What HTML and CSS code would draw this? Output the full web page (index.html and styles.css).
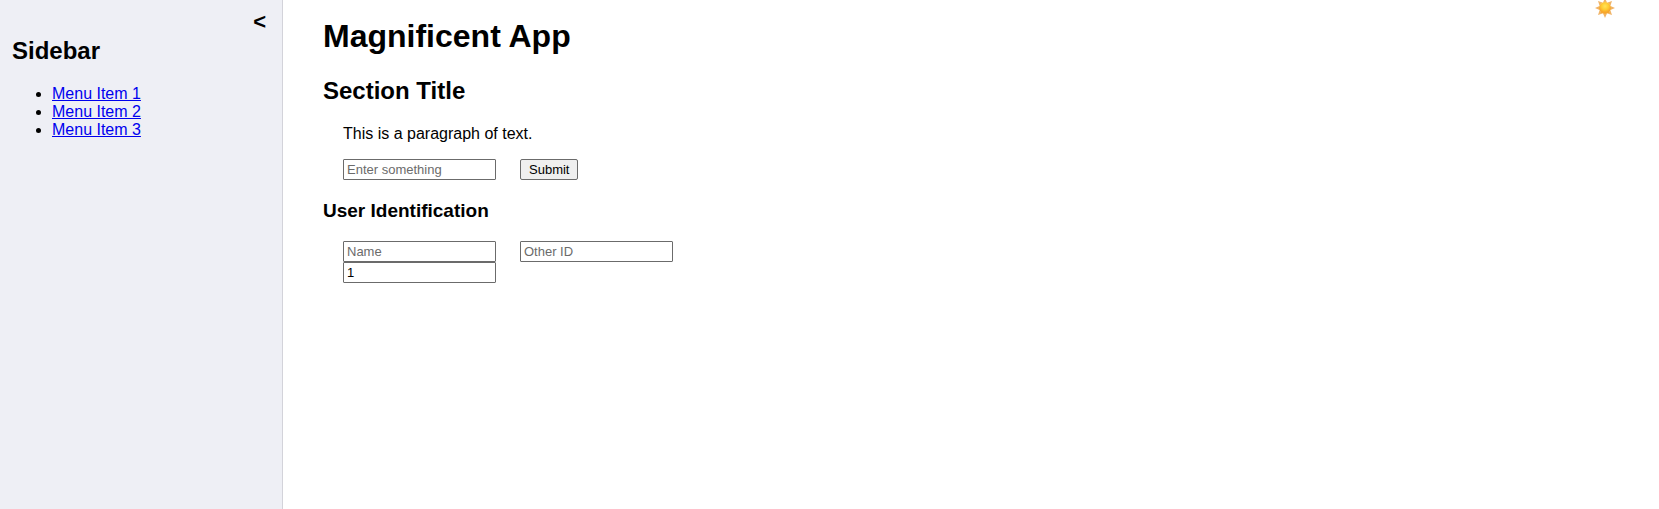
FILE: index.html
```html
<!DOCTYPE html>
<html lang="en">
<head>
<meta charset="utf-8">
<title>Magnificent App</title>
<link rel="stylesheet" href="styles.css">
</head>
<body>
<aside class="sidebar">
  <button class="collapse" type="button" aria-label="Collapse sidebar">&lt;</button>
  <h2 class="sidebar-title">Sidebar</h2>
  <ul class="menu">
    <li><a href="#item-1">Menu Item 1</a></li>
    <li><a href="#item-2">Menu Item 2</a></li>
    <li><a href="#item-3">Menu Item 3</a></li>
  </ul>
</aside>
<main class="content">
  <button class="theme" type="button" aria-label="Toggle theme">
    <svg class="sun" viewBox="0 0 20 20" aria-hidden="true">
      <defs>
        <radialGradient id="core" cy=".35"><stop offset="0" stop-color="#ffe458"/><stop offset=".6" stop-color="#ffca30"/><stop offset="1" stop-color="#f7a62c"/></radialGradient>
      </defs>
      <path fill="#f0b468" d="M10 0l2 4.500H8zM20 10l-4.500 2V8zM10 20l-2-4.500h4zM0 10l4.500-2v4zM17 3l-1.500 4.500-3-3zM17 17l-4.500-1.500 3-3zM3 17l1.500-4.500 3 3zM3 3l4.500 1.500-3 3z"/>
      <circle cx="10" cy="10" r="6" fill="url(#core)"/>
    </svg>
  </button>
  <h1 class="app-title">Magnificent App</h1>
  <h2 class="section-title">Section Title</h2>
  <p class="text">This is a paragraph of text.</p>
  <form class="fields">
    <input class="field" type="text" placeholder="Enter something" aria-label="Enter something">
    <button class="submit" type="button">Submit</button>
  </form>
  <h3 class="group-title">User Identification</h3>
  <form class="fields">
    <input class="field" type="text" placeholder="Name" aria-label="Name">
    <input class="field" type="text" placeholder="Other ID" aria-label="Other ID">
    <input class="field" type="text" value="1" aria-label="Number">
  </form>
</main>
</body>
</html>
```
FILE: styles.css
```css
* { box-sizing: border-box; }
body {
  display: flex;
  min-height: 100vh;
  margin: 0;
  background: #fff;
  color: #000;
  font: 16px/18px "Liberation Sans", Arial, sans-serif;
}
.sidebar {
  position: relative;
  flex: 0 0 283px;
  padding: 37px 12px;
  border-right: 1px solid #d3d3da;
  background: #eeeff5;
}
.collapse {
  position: absolute;
  top: 8px;
  right: 16px;
  padding: 0;
  border: 0;
  background: none;
  color: #000;
  font: bold 22px/27px "Liberation Sans", Arial, sans-serif;
}
.sidebar-title, .section-title { margin: 0; font-size: 24px; line-height: 28px; }
.menu { margin: 20px 0; padding-left: 40px; }
.menu a { color: #0000ee; }
.content { position: relative; flex: 1; padding: 18px 40px; }
.theme {
  position: absolute;
  top: -2px;
  right: 44px;
  padding: 0;
  border: 0;
  background: none;
}
.sun { display: block; width: 20px; height: 20px; }
.app-title { margin: 0 0 22px; font-size: 32px; line-height: 37px; }
.section-title { margin-bottom: 20px; }
.text { margin: 0 20px 16px; }
.fields {
  display: grid;
  grid-template-columns: 153px 153px;
  justify-items: start;
  column-gap: 24px;
  margin: 0 20px;
}
.field, .submit {
  height: 21px;
  border: 1px solid #6b6b6b;
  border-radius: 1px;
  font: 13px/15px "Liberation Sans", Arial, sans-serif;
}
.field { width: 153px; padding: 1px 3px; background: #fff; color: #000; }
.field::placeholder { color: #6b6b6b; }
.submit { padding: 1px 8px; border-radius: 2px; background: #efefef; color: #000; }
.group-title { margin: 20px 0; font-size: 19px; line-height: 21px; }
```
